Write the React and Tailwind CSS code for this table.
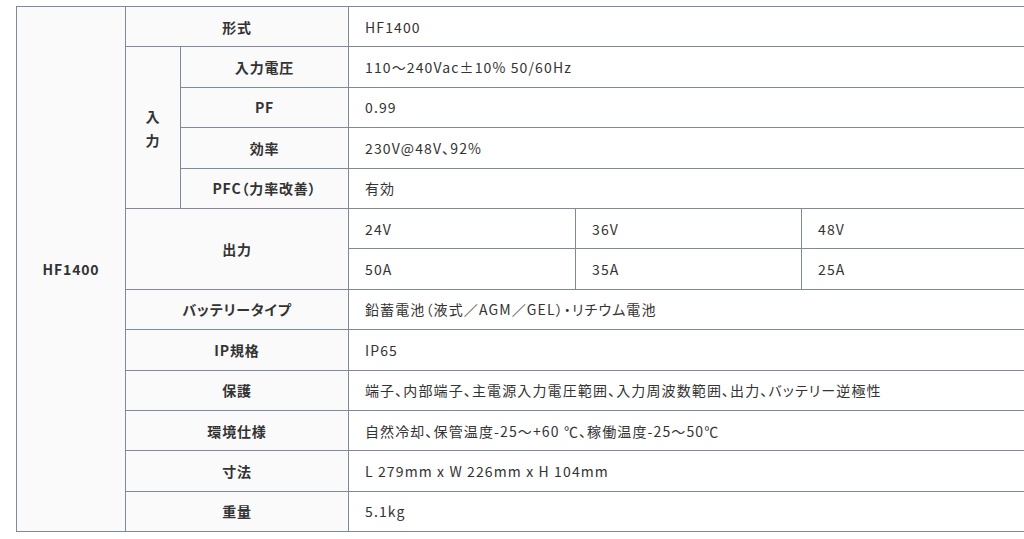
import React from "react";

const th = "border border-[#7f8a99] bg-[#fafafa] font-bold text-center text-[#333] tracking-[0.06em]";
const td = "border border-[#7f8a99] bg-white pl-4 text-left text-[#333] tracking-[0.08em]";

const rows = [
  ["バッテリータイプ", "鉛蓄電池（液式／AGM／GEL）・リチウム電池"],
  ["IP規格", "IP65"],
  ["保護", "端子、内部端子、主電源入力電圧範囲、入力周波数範囲、出力、バッテリー逆極性"],
  ["環境仕様", "自然冷却、保管温度-25～+60 ℃、稼働温度-25～50℃"],
  ["寸法", "L 279mm x W 226mm x H 104mm"],
  ["重量", "5.1kg"],
];

export default function App() {
  return (
    <div className="w-full h-[539px] overflow-hidden bg-white pt-[6px] pl-4">
      <table
        className="w-[1011px] table-fixed border-collapse text-[14px] leading-[24px] [font-feature-settings:'palt']"
        style={{ fontFamily: '"Noto Sans CJK JP", "Noto Sans", sans-serif' }}
      >
        <colgroup>
          <col className="w-[109px]" />
          <col className="w-[55px]" />
          <col className="w-[168px]" />
          <col className="w-[227px]" />
          <col className="w-[226px]" />
          <col className="w-[226px]" />
        </colgroup>
        <tbody>
          <tr className="h-[40.4px]">
            <th rowSpan={13} className={th}>HF1400</th>
            <th colSpan={2} className={th}>形式</th>
            <td colSpan={3} className={td}>HF1400</td>
          </tr>
          <tr className="h-[40.4px]">
            <th rowSpan={4} className={th}>
              入<br />力
            </th>
            <th className={th}>入力電圧</th>
            <td colSpan={3} className={td}>110～240Vac±10% 50/60Hz</td>
          </tr>
          <tr className="h-[40.4px]">
            <th className={th}>PF</th>
            <td colSpan={3} className={td}>0.99</td>
          </tr>
          <tr className="h-[40.4px]">
            <th className={th}>効率</th>
            <td colSpan={3} className={td}>230V@48V、92%</td>
          </tr>
          <tr className="h-[40.4px]">
            <th className={th}>PFC（力率改善）</th>
            <td colSpan={3} className={td}>有効</td>
          </tr>
          <tr className="h-[40.4px]">
            <th rowSpan={2} colSpan={2} className={th}>出力</th>
            <td className={td}>24V</td>
            <td className={td}>36V</td>
            <td className={td}>48V</td>
          </tr>
          <tr className="h-[40.4px]">
            <td className={td}>50A</td>
            <td className={td}>35A</td>
            <td className={td}>25A</td>
          </tr>
          {rows.map(([label, value]) => (
            <tr key={label} className="h-[40.4px]">
              <th colSpan={2} className={th}>{label}</th>
              <td colSpan={3} className={td}>{value}</td>
            </tr>
          ))}
        </tbody>
      </table>
    </div>
  );
}
